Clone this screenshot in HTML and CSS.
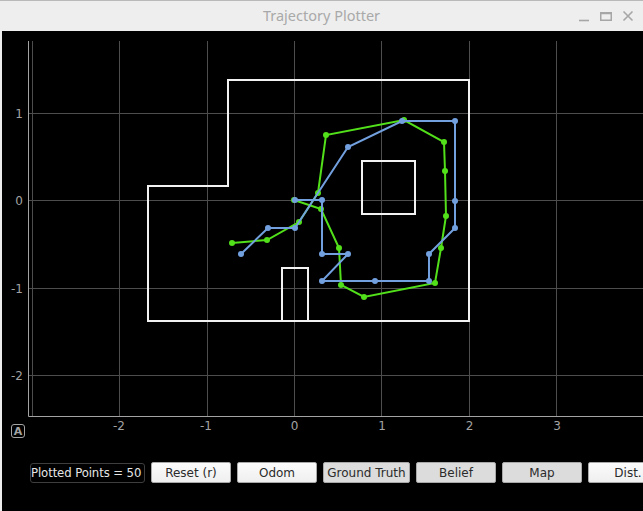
FILE: index.html
```html
<!DOCTYPE html>
<html>
<head>
<meta charset="utf-8">
<title>Trajectory Plotter</title>
<link rel="stylesheet" href="styles.css">
</head>
<body>
<div class="window">
  <div class="titlebar">
    <span class="title">Trajectory Plotter</span>
    <div class="win-controls">
      <svg class="wc" width="12" height="12" viewBox="0 0 12 12"><path d="M1 10.5h10" stroke="#a6a6a6" stroke-width="1.6"/></svg>
      <svg class="wc" width="12" height="12" viewBox="0 0 12 12"><rect x="0.75" y="2.75" width="10.5" height="7.5" fill="none" stroke="#a6a6a6" stroke-width="1.5"/><path d="M0.75 3.5h10.5" stroke="#a6a6a6" stroke-width="1.5"/></svg>
      <svg class="wc" width="12" height="12" viewBox="0 0 12 12"><path d="M1.5 1.5l9 9M10.5 1.5l-9 9" stroke="#a6a6a6" stroke-width="1.6"/></svg>
    </div>
  </div>
  <div class="content">
    <svg class="plot" width="641" height="411" viewBox="2 31 641 411">
      <g class="grid" stroke="#4d4d4d" stroke-width="1">
        <path d="M32.5 41V417M119.5 41V417M207.5 41V417M294.5 41V417M381.5 41V417M469.5 41V417M556.5 41V417"/>
        <path d="M28 113.5H643M28 200.5H643M28 288.5H643M28 375.5H643"/>
      </g>
      <path d="M28.5 41V416.5H643" fill="none" stroke="#a3a3a3" stroke-width="1"/>
      <g class="yt" font-family="DejaVu Sans, sans-serif" font-size="12" fill="#a3a3a3" text-anchor="end">
        <text x="23" y="118">1</text>
        <text x="23" y="205">0</text>
        <text x="23" y="293">-1</text>
        <text x="23" y="380">-2</text>
      </g>
      <g class="xt" font-family="DejaVu Sans, sans-serif" font-size="12" fill="#a3a3a3" text-anchor="middle">
        <text x="119" y="430">-2</text>
        <text x="206" y="430">-1</text>
        <text x="294.5" y="430">0</text>
        <text x="382" y="430">1</text>
        <text x="469.5" y="430">2</text>
        <text x="557" y="430">3</text>
      </g>
      <g class="map" fill="none" stroke="#f2f2f2" stroke-width="2">
        <path d="M148 186H228V80H469V321H148Z"/>
        <rect x="362" y="161" width="53" height="53"/>
        <path d="M282 321V268H308V321"/>
      </g>
      <g class="truth" fill="#52e01a" stroke="#52e01a">
        <polyline fill="none" stroke-width="2" points="294,200 321,209 339,248 341,285 364,297 435,283 441,248 446,216 445,171 444,142 404,120 326,135 318,193 299,222 267,240 232,243"/>
        <g stroke="none">
          <circle cx="294" cy="200" r="3"/><circle cx="321" cy="209" r="3"/><circle cx="339" cy="248" r="3"/><circle cx="341" cy="285" r="3"/>
          <circle cx="364" cy="297" r="3"/><circle cx="435" cy="283" r="3"/><circle cx="441" cy="248" r="3"/><circle cx="446" cy="216" r="3"/>
          <circle cx="445" cy="171" r="3"/><circle cx="444" cy="142" r="3"/><circle cx="404" cy="120" r="3"/><circle cx="326" cy="135" r="3"/>
          <circle cx="318" cy="193" r="3"/><circle cx="299" cy="222" r="3"/><circle cx="267" cy="240" r="3"/><circle cx="232" cy="243" r="3"/>
        </g>
      </g>
      <g class="odom" fill="#72a0df" stroke="#72a0df">
        <polyline fill="none" stroke-width="2" points="295,200 322,200 322,254 348,254 322,281 375,281 429,281 429,254 455,228 455,201 455,121 402,121 348,147 295,228 268,228 241,254"/>
        <g stroke="none">
          <circle cx="295" cy="200" r="3"/><circle cx="322" cy="200" r="3"/><circle cx="322" cy="254" r="3"/><circle cx="348" cy="254" r="3"/>
          <circle cx="322" cy="281" r="3"/><circle cx="375" cy="281" r="3"/><circle cx="429" cy="281" r="3"/><circle cx="429" cy="254" r="3"/>
          <circle cx="455" cy="228" r="3"/><circle cx="455" cy="201" r="3"/><circle cx="455" cy="121" r="3"/><circle cx="402" cy="121" r="3"/>
          <circle cx="348" cy="147" r="3"/><circle cx="295" cy="228" r="3"/><circle cx="268" cy="228" r="3"/><circle cx="241" cy="254" r="3"/>
        </g>
      </g>
      <g class="autobtn">
        <rect x="11.5" y="424.5" width="13" height="13" rx="2.5" fill="none" stroke="#a3a3a3" stroke-width="1"/>
        <text x="18" y="435" font-family="DejaVu Sans, sans-serif" font-size="11" font-weight="bold" fill="#a3a3a3" text-anchor="middle">A</text>
      </g>
    </svg>
    <div class="controls">
      <div class="count">Plotted Points = 50</div>
      <button class="btn">Reset (r)</button>
      <button class="btn">Odom</button>
      <button class="btn on wide">Ground Truth</button>
      <button class="btn on">Belief</button>
      <button class="btn on">Map</button>
      <button class="btn">Dist.</button>
    </div>
  </div>
</div>
</body>
</html>
```

FILE: styles.css
```css
* { box-sizing: border-box; }
html, body {
  margin: 0;
  padding: 0;
  background: #ededed;
  overflow: hidden;
}
.window {
  width: 643px;
  height: 511px;
  display: flex;
  flex-direction: column;
  background: #ededed;
}
.titlebar {
  height: 31px;
  flex-shrink: 0;
  border-top: 1px solid #b9b9b9;
  background: #eeeeee;
  display: flex;
  align-items: center;
  justify-content: center;
  position: relative;
}
.title {
  font-family: "Noto Sans", "DejaVu Sans", sans-serif;
  font-size: 14.5px;
  color: #a9a9a9;
  margin-top: -3px;
}
.win-controls {
  position: absolute;
  right: 9px;
  top: 9px;
  display: flex;
  gap: 10px;
}
.wc { display: block; }
.content {
  flex: 1;
  margin-left: 2px;
  background: #000;
  overflow: hidden;
  display: flex;
  flex-direction: column;
}
.plot { display: block; flex-shrink: 0; }
.controls {
  display: flex;
  align-items: center;
  margin-top: 20px;
  padding-left: 28px;
  gap: 6px;
  flex-wrap: nowrap;
}
.count {
  flex-shrink: 0;
  width: 115px;
  height: 20px;
  border: 1px solid #3e3e3e;
  border-radius: 3px;
  font-family: "DejaVu Sans", sans-serif;
  font-size: 11.7px;
  letter-spacing: -0.1px;
  line-height: 18px;
  color: #e6e6e6;
  white-space: nowrap;
  overflow: hidden;
}
.btn {
  flex-shrink: 0;
  width: 80px;
  height: 21px;
  padding: 0;
  margin: 0;
  border: 1px solid #a8a8a8;
  border-radius: 2px;
  background: linear-gradient(#fbfbfb, #efefef);
  font-family: "DejaVu Sans", sans-serif;
  font-size: 12px;
  color: #2b2b2b;
  white-space: nowrap;
}
.btn.on { background: #dcdcdc; }
.btn.wide { width: 87px; }
```
